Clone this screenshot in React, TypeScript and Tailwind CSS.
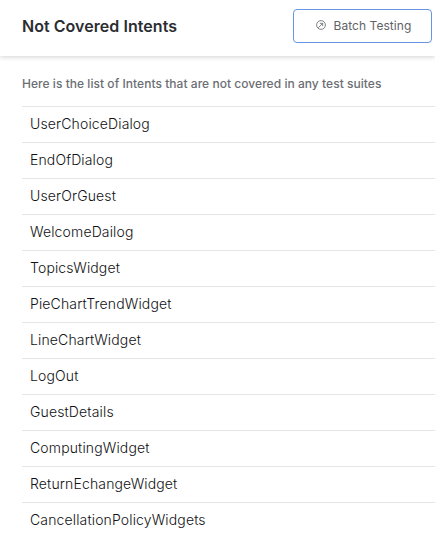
const intents: string[] = [
  'UserChoiceDialog',
  'EndOfDialog',
  'UserOrGuest',
  'WelcomeDailog',
  'TopicsWidget',
  'PieChartTrendWidget',
  'LineChartWidget',
  'LogOut',
  'GuestDetails',
  'ComputingWidget',
  'ReturnEchangeWidget',
  'CancellationPolicyWidgets',
];

function CircleArrowIcon() {
  return (
    <svg width="10" height="10" viewBox="0 0 10 10" fill="none" stroke="#5f6368" strokeWidth="0.8" className="mb-0.5 shrink-0">
      <circle cx="5" cy="5" r="4.4" />
      <path d="M2.2 7.8L6.5 3.5M3.8 3.3H6.7V6.2" />
    </svg>
  );
}

function Header() {
  return (
    <header className="flex h-14 items-start justify-between bg-white pl-[22px] pr-[3px] shadow-[0_1px_5px_rgba(0,0,0,0.18)]">
      <h1 className="mt-[14px] whitespace-nowrap text-base leading-6 font-semibold tracking-[0.05px] text-[#2b2d31]">
        Not Covered Intents
      </h1>
      <button className="mt-[9px] flex h-[34px] w-[139px] items-center rounded border border-[#6595e3] bg-white pl-[22px] text-xs text-[#5f6368]">
        <CircleArrowIcon />
        <span className="ml-[7.5px] whitespace-nowrap tracking-[0.05px]">Batch Testing</span>
      </button>
    </header>
  );
}

export default function App() {
  return (
    <div className="h-[538px] w-[435px] overflow-hidden bg-white font-['Inter','Liberation_Sans',sans-serif]">
      <Header />
      <main className="pl-[22px]">
        <p className="flex h-[50px] items-center pt-[6px] text-xs font-medium tracking-[0.04px] text-[#6b6e73]">
          Here is the list of Intents that are not covered in any test suites
        </p>
        <ul>
          {intents.map((name) => (
            <li key={name} className="flex h-9 items-center border-t border-[#e4e5e7] pb-px pl-2 text-sm font-light tracking-[0.14px] text-[#111214]">
              {name}
            </li>
          ))}
        </ul>
      </main>
    </div>
  );
}
